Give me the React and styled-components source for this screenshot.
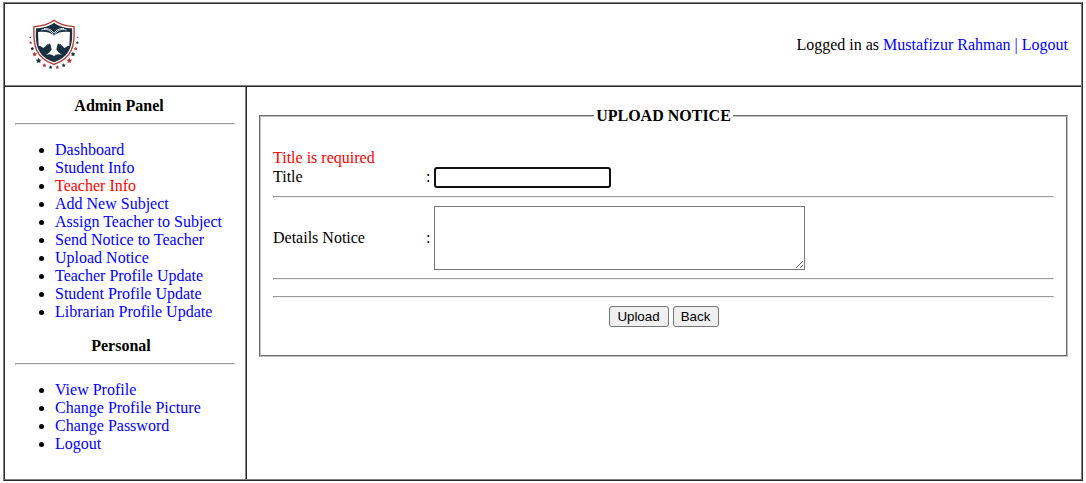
import React from "react";
import styled, { createGlobalStyle } from "styled-components";

const GlobalStyle = createGlobalStyle`
  body {
    margin: 0;
    background: #fff;
    color: #000;
    font: 16px/18px "Liberation Serif", "Times New Roman", serif;
  }
`;

const Frame = styled.div`
  box-sizing: border-box;
  display: flex;
  flex-direction: column;
  width: 1080px;
  height: 479px;
  margin: 2px 0 0 3px;
  border: 2px ridge #808080;
`;

const Header = styled.header`
  display: flex;
  align-items: center;
  justify-content: space-between;
  height: 81px;
  padding: 0 13px 0 23px;
  border-bottom: 2px ridge #808080;
`;

const Body = styled.div`
  display: flex;
  flex: 1;
`;

const Sidebar = styled.nav`
  box-sizing: border-box;
  width: 242px;
  padding: 10px 10px 0;
  border-right: 2px ridge #808080;
`;

const Main = styled.main`
  flex: 1;
  padding: 20px 13px 0 12px;
`;

const PanelTitle = styled.div`
  font-weight: bold;
  text-align: center;
  padding-right: ${(p) => p.$inset}px;
`;

const Rule = styled.hr`
  margin: ${(p) => p.$top ?? 8}px 0 8px;
  border: 1px solid;
  border-color: #9a9a9a #eee #eee #9a9a9a;
`;

const Menu = styled.ul`
  margin: 16px 0;
  padding-left: 40px;
  white-space: nowrap;
`;

const Link = styled.a`
  color: ${(p) => (p.$active ? "#f00" : "#00f")};
  text-decoration: none;
`;

const Fieldset = styled.fieldset`
  box-sizing: border-box;
  height: 250px;
  margin: 0;
  padding: 24px 12px 0;
  border: 2px groove #c0c0c0;
`;

const Legend = styled.legend`
  margin: 0 auto;
  padding: 0 2px;
  font-weight: bold;
`;

const ErrorText = styled.div`
  color: #f00;
`;

const Row = styled.div`
  display: grid;
  grid-template-columns: 153px 8px 1fr;
  align-items: center;
`;

const Label = styled.span`
  padding-bottom: ${(p) => p.$lift ?? 0}px;
`;

const TextInput = styled.input`
  box-sizing: border-box;
  width: 177px;
  height: 21px;
  margin: 0;
  padding: 1px 2px;
  border: 2px solid #101010;
  border-radius: 3px;
  outline: none;
  background: #fff;
`;

const TextArea = styled.textarea`
  box-sizing: border-box;
  display: block;
  width: 371px;
  height: 64px;
  margin: 0;
  border: 1px solid #767676;
  background: #fff;
`;

const Actions = styled.div`
  display: flex;
  justify-content: center;
  gap: 4px;
`;

const Button = styled.button`
  box-sizing: border-box;
  width: ${(p) => p.$width}px;
  height: 21px;
  padding: 0;
  border: 1px solid #767676;
  border-radius: 3px;
  background: #efefef;
  color: #000;
  font: 13.333px/15px "Liberation Sans", Arial, sans-serif;
`;

const NAVY = "#18303f";
const RED = "#b5352f";

const STARS = [
  [91, 112, 3, NAVY], [92, 128, 5, RED], [97, 146, 6, NAVY], [104, 163, 7.5, RED],
  [116, 182, 9, NAVY], [133, 196, 6.5, RED], [152, 202, 6, NAVY], [172, 202, 6, RED],
  [191, 196, 6.5, NAVY], [208, 182, 9, RED], [219, 163, 7.5, NAVY], [227, 146, 6, RED],
  [232, 128, 5, NAVY], [233, 112, 3, RED],
];

function starPoints(cx, cy, r) {
  return Array.from({ length: 10 }, (_, i) => {
    const a = (Math.PI / 5) * i - Math.PI / 2;
    const d = i % 2 ? r * 0.5 : r;
    return `${cx + d * Math.cos(a)},${cy + d * Math.sin(a)}`;
  }).join(" ");
}

function Logo() {
  const half = (
    <>
      <path d="M162.5 107C152 96 135 93 114 96L116 138L130 146L150 130L155 148L149 157L138 165C148 161 156 162 162.5 169Z" fill="#fff" />
      <path d="M124 90C140 85 154 92 160 104M132 86C145 84 156 90 161 99" fill="none" stroke="#fff" strokeWidth="2.5" />
      <path d="M116 137C122 137 127 142 131 144L144 131L146 132L141 140L149 133L151 135L145 143L152 139L153 142L146 148L150 147L149 150L142 157C134 162 124 157 118 151Z" fill={NAVY} />
    </>
  );
  return (
    <svg width="52" height="53" viewBox="84 54 156 159" aria-label="School crest">
      <path d="M162 61C146 74 124 79 102 80C99 134 106 175 162 193C218 175 225 134 222 80C200 79 178 74 162 61Z" fill="#fff" stroke={RED} strokeWidth="4" />
      <path d="M162 68C146 80 126 84 108 85C105 134 112 170 162 187C212 170 219 134 216 85C198 84 178 80 162 68Z" fill={NAVY} />
      {half}
      <g transform="translate(324 0) scale(-1 1)">{half}</g>
      {STARS.map(([x, y, r, color]) => (
        <polygon key={`${x}-${y}`} points={starPoints(x, y, r)} fill={color} />
      ))}
    </svg>
  );
}

const ADMIN_LINKS = [
  "Dashboard",
  "Student Info",
  "Teacher Info",
  "Add New Subject",
  "Assign Teacher to Subject",
  "Send Notice to Teacher",
  "Upload Notice",
  "Teacher Profile Update",
  "Student Profile Update",
  "Librarian Profile Update",
];

const PERSONAL_LINKS = ["View Profile", "Change Profile Picture", "Change Password", "Logout"];

function Panel({ title, links, active, inset }) {
  return (
    <>
      <PanelTitle $inset={inset}>{title}</PanelTitle>
      <Rule />
      <Menu>
        {links.map((label) => (
          <li key={label}>
            <Link href="#" $active={label === active}>{label}</Link>
          </li>
        ))}
      </Menu>
    </>
  );
}

export default function App() {
  return (
    <>
      <GlobalStyle />
      <Frame>
        <Header>
          <Logo />
          <div>
            Logged in as <Link href="#">Mustafizur Rahman</Link>{" "}
            <Link href="#">| Logout</Link>
          </div>
        </Header>
        <Body>
          <Sidebar>
            <Panel title="Admin Panel" links={ADMIN_LINKS} active="Teacher Info" inset={12} />
            <Panel title="Personal" links={PERSONAL_LINKS} inset={8} />
          </Sidebar>
          <Main>
            <Fieldset>
              <Legend>UPLOAD NOTICE</Legend>
              <ErrorText>Title is required</ErrorText>
              <Row>
                <Label $lift={2}>Title</Label>
                <Label $lift={2}>:</Label>
                <TextInput type="text" aria-label="Title" />
              </Row>
              <Rule />
              <Row>
                <Label>Details Notice</Label>
                <Label>:</Label>
                <TextArea aria-label="Details Notice" />
              </Row>
              <Rule />
              <Rule $top={16} />
              <Actions>
                <Button $width={60} type="button">Upload</Button>
                <Button $width={46} type="button">Back</Button>
              </Actions>
            </Fieldset>
          </Main>
        </Body>
      </Frame>
    </>
  );
}
